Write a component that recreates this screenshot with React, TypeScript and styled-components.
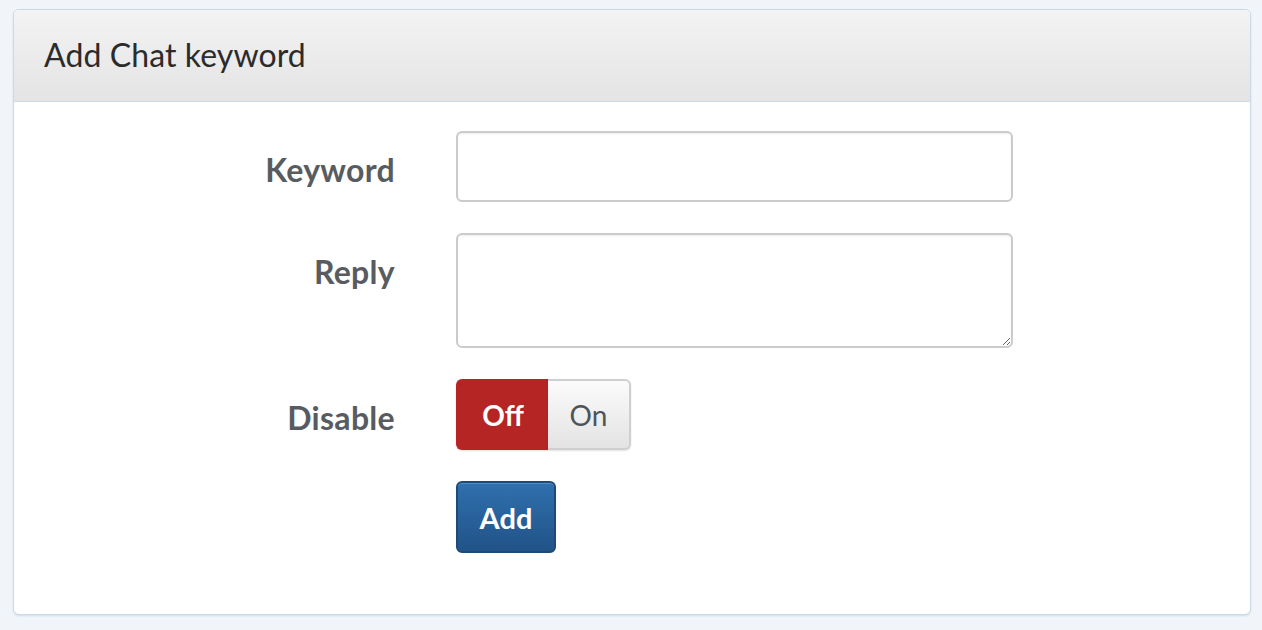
import React from "react";
import styled, { createGlobalStyle } from "styled-components";

const Global = createGlobalStyle`
  html, body { margin: 0; padding: 0; }
  body {
    background: #f1f5f9;
    font-family: Lato, "Open Sans", "DejaVu Sans", sans-serif;
  }
`;

const Page = styled.div`
  padding: 9px 11px 15px 13px;
`;

const Panel = styled.section`
  background: #ffffff;
  border: 1px solid #cbdae7;
  border-radius: 6px;
  box-shadow: 0 1px 2px rgba(120, 150, 180, 0.25);
  overflow: hidden;
`;

const Header = styled.header`
  height: 92px;
  box-sizing: border-box;
  display: flex;
  align-items: center;
  padding: 0 30px 2px;
  background: linear-gradient(to bottom, #f3f3f3, #e4e4e4);
  border-bottom: 1px solid #cbdae7;
`;

const Title = styled.h2`
  margin: 0;
  font-size: 32px;
  font-weight: 400;
  color: #2b2b2b;
  letter-spacing: 0.1px;
`;

const Form = styled.form`
  display: grid;
  grid-template-columns: 381px 557px;
  column-gap: 61px;
  row-gap: 31px;
  padding: 29px 0 61px;
`;

const Label = styled.label`
  height: 71px;
  display: flex;
  align-items: center;
  justify-content: flex-end;
  padding-top: 5px;
  box-sizing: border-box;
  font-size: 32px;
  letter-spacing: 0.3px;
  font-weight: 700;
  color: #585c60;
  align-self: start;
`;

const fieldBase = `
  box-sizing: border-box;
  width: 100%;
  border: 2px solid #cbcbcb;
  border-radius: 6px;
  background: #fff;
  box-shadow: inset 0 1px 2px rgba(0, 0, 0, 0.08);
  font-family: inherit;
  font-size: 28px;
  padding: 8px 14px;
  outline: none;
`;

const TextInput = styled.input`
  ${fieldBase}
  height: 71px;
`;

const TextArea = styled.textarea`
  ${fieldBase}
  height: 115px;
  display: block;
  resize: vertical;
`;

const Toggle = styled.div`
  display: flex;
  width: 175px;
  height: 71px;
`;

const ToggleOption = styled.button<{ $active?: boolean; $side: "left" | "right" }>`
  box-sizing: border-box;
  height: 100%;
  font-family: inherit;
  font-size: 28px;
  font-weight: ${(p) => (p.$active ? 700 : 400)};
  padding: 0;
  cursor: pointer;
  color: ${(p) => (p.$active ? "#ffffff" : "#4f5458")};
  background: ${(p) =>
    p.$active ? "#b52524" : "linear-gradient(to bottom, #fbfbfb, #e3e3e3)"};
  border: 2px solid ${(p) => (p.$active ? "#b52524" : "#cfcfcf")};
  ${(p) => (p.$side === "left" ? "border-right: none;" : "border-left: none;")}
  border-radius: ${(p) => (p.$side === "left" ? "6px 0 0 6px" : "0 6px 6px 0")};
  width: ${(p) => (p.$side === "left" ? "92px" : "83px")};
  box-shadow: 0 1px 2px rgba(0, 0, 0, 0.12);
`;

const AddButton = styled.button`
  box-sizing: border-box;
  width: 100px;
  height: 72px;
  border: 2px solid #1d4a78;
  border-radius: 6px;
  background: linear-gradient(to bottom, #2f70ae, #215387);
  box-shadow: inset 0 1px 0 rgba(255, 255, 255, 0.2);
  color: #ffffff;
  font-family: inherit;
  font-size: 29px;
  font-weight: 700;
  cursor: pointer;
  padding: 0;
`;

const Spacer = styled.div``;

export default function App() {
  return (
    <>
      <Global />
      <Page>
        <Panel>
          <Header>
            <Title>Add Chat keyword</Title>
          </Header>
          <Form onSubmit={(e) => e.preventDefault()}>
            <Label htmlFor="kw">Keyword</Label>
            <TextInput id="kw" type="text" />
            <Label htmlFor="reply">Reply</Label>
            <TextArea id="reply" />
            <Label>Disable</Label>
            <Toggle>
              <ToggleOption type="button" $active $side="left">
                Off
              </ToggleOption>
              <ToggleOption type="button" $side="right">
                On
              </ToggleOption>
            </Toggle>
            <Spacer />
            <AddButton type="submit">Add</AddButton>
          </Form>
        </Panel>
      </Page>
    </>
  );
}
